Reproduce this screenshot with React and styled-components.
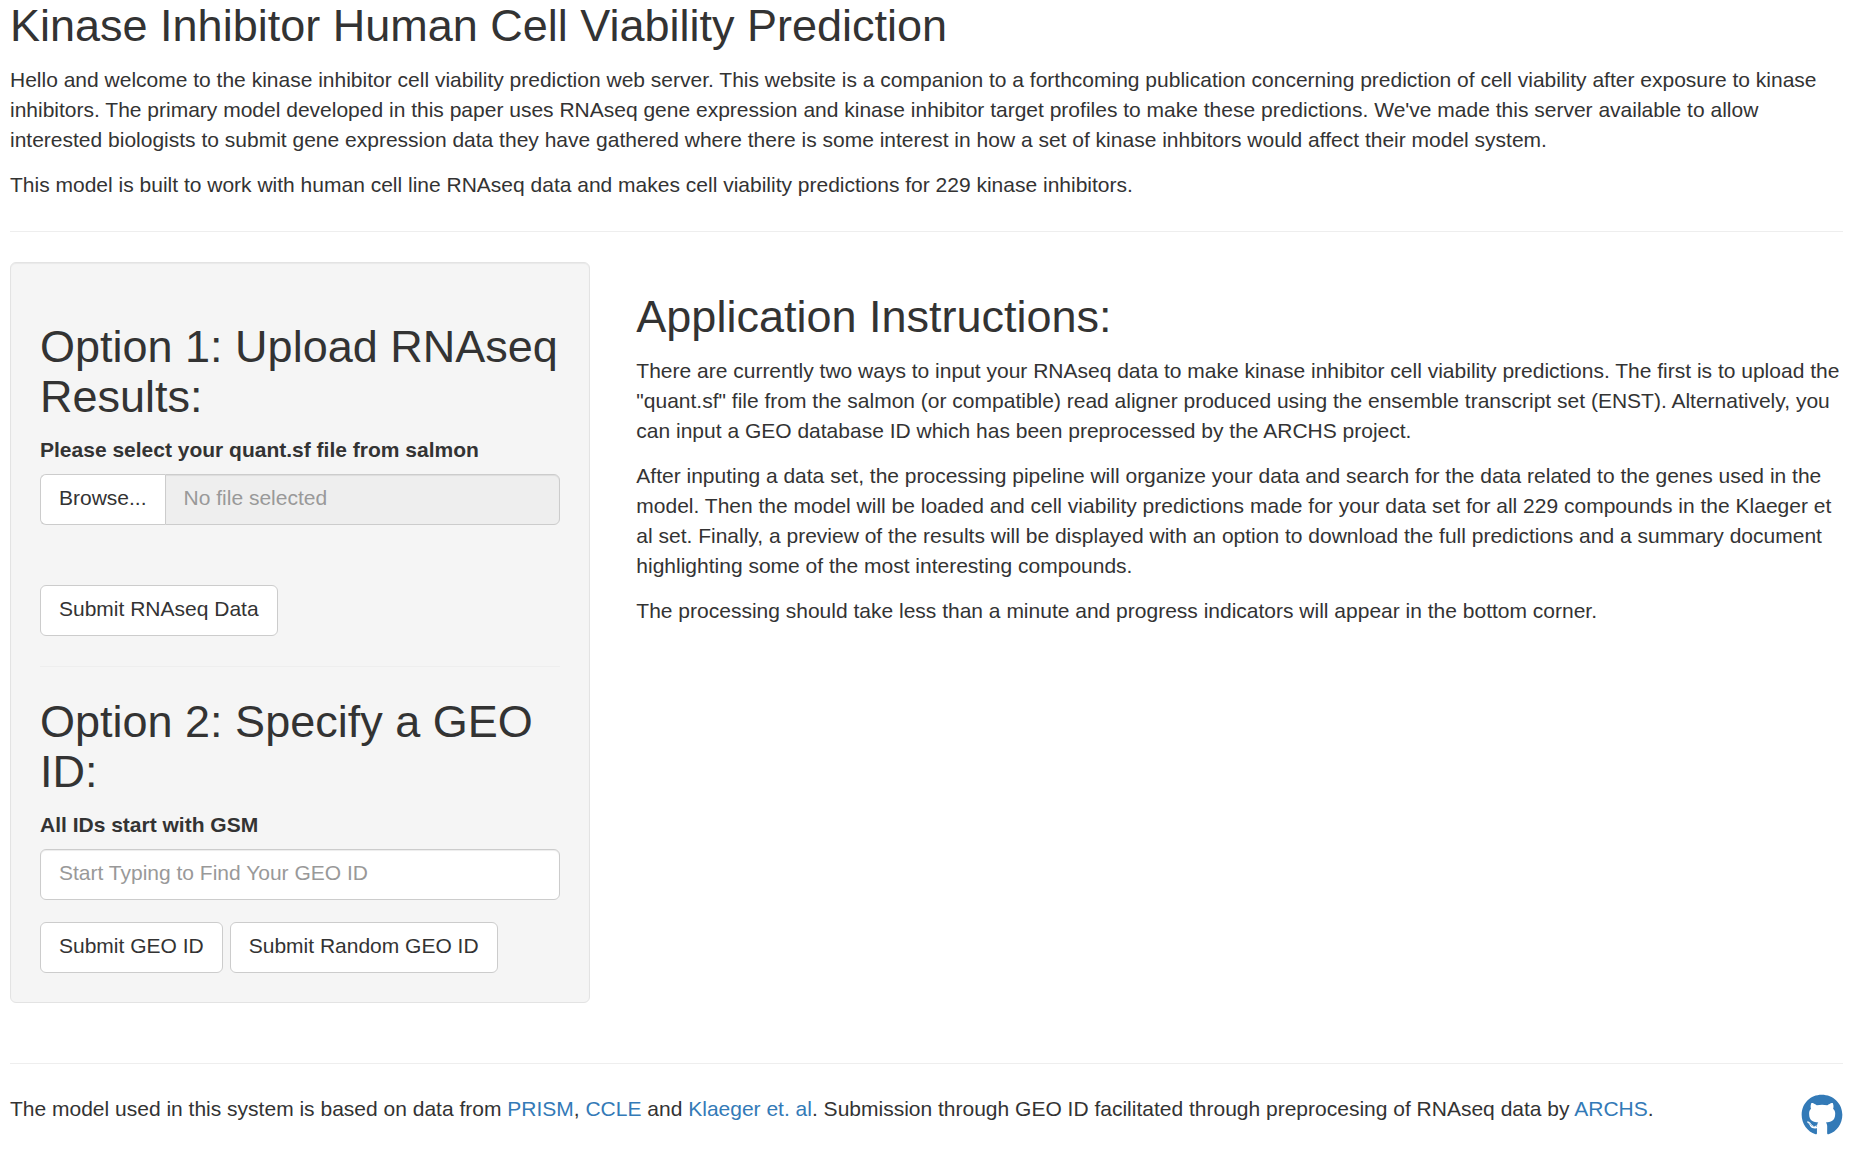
import React, { useRef, useState } from "react";
import styled, { createGlobalStyle } from "styled-components";
import { FaGithub } from "react-icons/fa";

const GlobalStyle = createGlobalStyle`
  *, *::before, *::after { box-sizing: border-box; }
  body {
    margin: 0;
    background: #fff;
    color: #333;
    font-family: "Liberation Sans", "Helvetica Neue", Helvetica, Arial, sans-serif;
    font-size: 21px;
    line-height: 30px;
  }
  input, button { font: inherit; }
`;

const Page = styled.div`
  padding: 1px 14px 0 10px;
`;

const Intro = styled.header`
  margin-bottom: 31px;
`;

const Title = styled.h1`
  margin: 0 0 14px;
  font-size: 45px;
  font-weight: 400;
  line-height: 50px;
`;

const SectionHeading = styled.h2`
  margin: 30px 0 14px;
  font-size: 45px;
  font-weight: 400;
  line-height: 50px;
`;

const FormHeading = styled(SectionHeading)`
  margin-bottom: 13px;
`;

const Paragraph = styled.p`
  margin: 0 0 15px;
`;

const Rule = styled.hr`
  margin: 30px 0;
  border: 0;
  border-top: 1px solid #eee;
`;

const Columns = styled.div`
  display: grid;
  grid-template-columns: repeat(12, minmax(0, 1fr));
  column-gap: 46px;
  align-items: start;
  margin-bottom: 60px;
`;

const Sidebar = styled.form`
  grid-column: span 4;
  display: flow-root;
  padding: 29px;
  border: 1px solid #e3e3e3;
  border-radius: 6px;
  background: #f5f5f5;
  box-shadow: inset 0 1px 1px rgba(0, 0, 0, 0.05);
`;

const Main = styled.main`
  grid-column: span 8;
  display: flow-root;
`;

const Label = styled.label`
  display: block;
  margin-bottom: 9px;
  font-weight: 700;
`;

const Button = styled.button`
  padding: 8px 18px 11px;
  border: 1px solid #ccc;
  border-radius: 6px;
  background: #fff;
  color: #333;
  white-space: nowrap;
  cursor: pointer;
  &:hover { background: #e6e6e6; }
`;

const BrowseButton = styled(Button)`
  border-right: 0;
  border-radius: 6px 0 0 6px;
`;

const TextInput = styled.input`
  display: block;
  width: 100%;
  min-width: 0;
  height: 51px;
  padding: 8px 18px 11px;
  border: 1px solid #ccc;
  border-radius: 6px;
  background: #fff;
  color: #555;
  box-shadow: inset 0 1px 1px rgba(0, 0, 0, 0.075);
  &::placeholder { color: #999; opacity: 1; }
`;

const FileName = styled(TextInput)`
  flex: 1;
  border-radius: 0 6px 6px 0;
  background: #eee;
`;

const FileGroup = styled.div`
  display: flex;
  margin-bottom: 60px;
`;

const ButtonRow = styled.div`
  display: flex;
  flex-wrap: wrap;
  gap: 7px;
  margin-top: ${({ $spaced }) => ($spaced ? "22px" : "0")};
`;

const Footer = styled.footer`
  display: flex;
  justify-content: space-between;
  align-items: flex-start;
`;

const Link = styled.a`
  color: #337ab7;
  text-decoration: none;
  &:hover { text-decoration: underline; }
`;

const IconLink = styled(Link)`
  display: flex;
`;

export default function App() {
  const picker = useRef(null);
  const [fileName, setFileName] = useState("");

  return (
    <>
      <GlobalStyle />
      <Page>
        <Intro>
          <Title>Kinase Inhibitor Human Cell Viability Prediction</Title>
          <Paragraph>
            Hello and welcome to the kinase inhibitor cell viability prediction web server. This
            website is a companion to a forthcoming publication concerning prediction of cell
            viability after exposure to kinase inhibitors. The primary model developed in this
            paper uses RNAseq gene expression and kinase inhibitor target profiles to make these
            predictions. We've made this server available to allow interested biologists to submit
            gene expression data they have gathered where there is some interest in how a set of
            kinase inhbitors would affect their model system.
          </Paragraph>
          <Paragraph>
            This model is built to work with human cell line RNAseq data and makes cell viability
            predictions for 229 kinase inhibitors.
          </Paragraph>
        </Intro>
        <Rule />

        <Columns>
          <Sidebar onSubmit={(event) => event.preventDefault()}>
            <FormHeading>Option 1: Upload RNAseq Results:</FormHeading>
            <Label htmlFor="quant-name">Please select your quant.sf file from salmon</Label>
            <FileGroup>
              <BrowseButton type="button" onClick={() => picker.current.click()}>
                Browse...
              </BrowseButton>
              <input
                ref={picker}
                type="file"
                hidden
                aria-label="quant.sf file"
                onChange={(event) => setFileName(event.target.files[0]?.name ?? "")}
              />
              <FileName
                id="quant-name"
                type="text"
                placeholder="No file selected"
                value={fileName}
                readOnly
              />
            </FileGroup>
            <ButtonRow>
              <Button type="button">Submit RNAseq Data</Button>
            </ButtonRow>
            <Rule />
            <FormHeading>Option 2: Specify a GEO ID:</FormHeading>
            <Label htmlFor="geo-id">All IDs start with GSM</Label>
            <TextInput id="geo-id" type="text" placeholder="Start Typing to Find Your GEO ID" />
            <ButtonRow $spaced>
              <Button type="button">Submit GEO ID</Button>
              <Button type="button">Submit Random GEO ID</Button>
            </ButtonRow>
          </Sidebar>

          <Main>
            <SectionHeading>Application Instructions:</SectionHeading>
            <Paragraph>
              There are currently two ways to input your RNAseq data to make kinase inhibitor cell
              viability predictions. The first is to upload the "quant.sf" file from the salmon (or
              compatible) read aligner produced using the ensemble transcript set (ENST).
              Alternatively, you can input a GEO database ID which has been preprocessed by the
              ARCHS project.
            </Paragraph>
            <Paragraph>
              After inputing a data set, the processing pipeline will organize your data and search
              for the data related to the genes used in the model. Then the model will be loaded
              and cell viability predictions made for your data set for all 229 compounds in the
              Klaeger et al set. Finally, a preview of the results will be displayed with an option
              to download the full predictions and a summary document highlighting some of the most
              interesting compounds.
            </Paragraph>
            <Paragraph>
              The processing should take less than a minute and progress indicators will appear in
              the bottom corner.
            </Paragraph>
          </Main>
        </Columns>

        <Rule />
        <Footer>
          <Paragraph>
            The model used in this system is based on data from <Link href="#prism">PRISM</Link>,{" "}
            <Link href="#ccle">CCLE</Link> and <Link href="#klaeger">Klaeger et. al</Link>.
            Submission through GEO ID facilitated through preprocesing of RNAseq data by{" "}
            <Link href="#archs">ARCHS</Link>.
          </Paragraph>
          <IconLink href="#github" aria-label="GitHub">
            <FaGithub size={42} />
          </IconLink>
        </Footer>
      </Page>
    </>
  );
}
